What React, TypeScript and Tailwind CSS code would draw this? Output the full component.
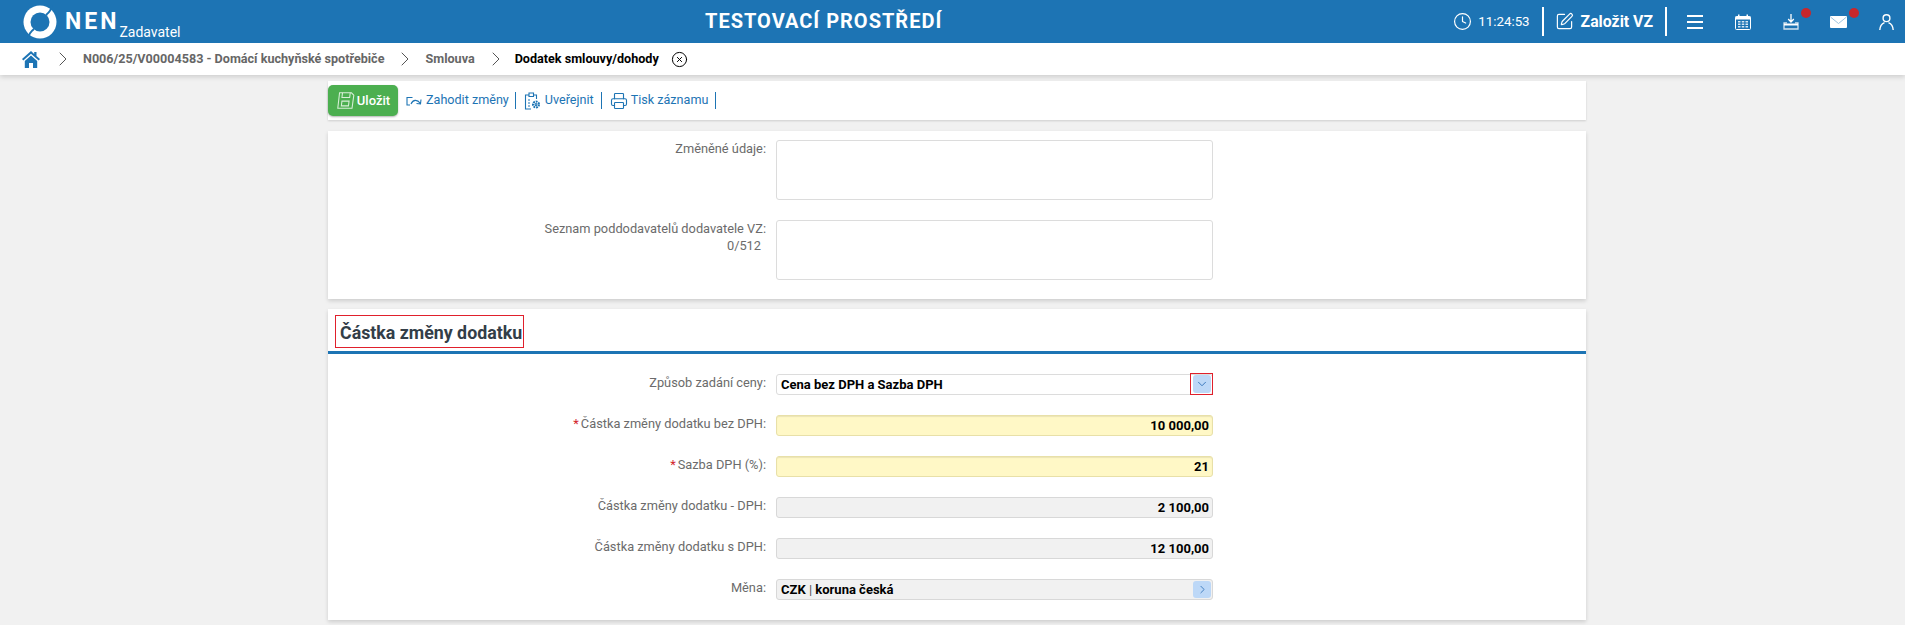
import React from 'react';
import { ChevronDown, ChevronRight, CircleX, Clock, Printer, SquarePen } from 'lucide-react';

const labelCls = 'w-[448px] pr-[10px] text-right text-[12.8px] leading-[17px] text-[#6b6b6b]';

const Field = ({ label, required, value, kind }: { label: string; required?: boolean; value: React.ReactNode; kind: 'select' | 'yellow' | 'gray' | 'lookup' }) => (
  <div className="flex h-[41px] items-start">
    <div className={labelCls}>
      {required && <span className="mr-[2px] text-[#d2232a]">*</span>}
      {label}
    </div>
    {kind === 'select' && (
      <div className="relative flex h-[21px] w-[437px] items-center rounded-[3px] border border-[#dcdcdc] bg-white pl-[4px] text-[13px] font-bold text-black">
        {value}
        <div className="absolute right-[-1px] top-[-2px] flex h-[22px] w-[23px] items-center justify-center border border-[#e0202c]">
          <div className="flex h-[18px] w-[18px] items-center justify-center rounded-[3px] bg-[#bdd8f7]">
            <ChevronDown size={14} strokeWidth={1.5} className="text-[#2a6db5]" />
          </div>
        </div>
      </div>
    )}
    {kind === 'yellow' && (
      <div className="flex h-[21px] w-[437px] items-center justify-end rounded-[3px] border border-[#e8e0a8] bg-[#fff8c6] pr-[3px] text-[13px] font-bold text-black shadow-[inset_0_1px_1px_rgba(0,0,0,0.08)]">
        {value}
      </div>
    )}
    {kind === 'gray' && (
      <div className="flex h-[21px] w-[437px] items-center justify-end rounded-[3px] border border-[#d8d8d8] bg-[#f1f1f1] pr-[3px] text-[13px] font-bold text-black">
        {value}
      </div>
    )}
    {kind === 'lookup' && (
      <div className="flex h-[21px] w-[437px] items-center justify-between rounded-[3px] border border-[#d8d8d8] bg-[#f1f1f1] pl-[4px] text-[13px] font-bold text-black">
        {value}
        <div className="mr-[1px] flex h-[17px] w-[18px] items-center justify-center rounded-[3px] bg-[#bdd8f7]">
          <ChevronRight size={13} strokeWidth={1.5} className="text-[#2a6db5]" />
        </div>
      </div>
    )}
  </div>
);

const TextAreaRow = ({ label, sub }: { label: string; sub?: string }) => (
  <div className="flex items-start">
    <div className={labelCls}>
      <div>{label}</div>
      {sub && <div className="pr-[5px]">{sub}</div>}
    </div>
    <div className="h-[60px] w-[437px] rounded-[3px] border border-[#dcdcdc] bg-white" />
  </div>
);

const Sep = () => <ChevronRight size={24} strokeWidth={1} className="text-[#555555]" />;

const ToolDivider = () => <div className="h-[17px] w-[1px] bg-[#1d74b4]" />;

export default function App() {
  return (
    <div className="h-[625px] overflow-hidden bg-[#f1f1f1] font-['Roboto',sans-serif]">
      {/* top bar */}
      <div className="relative flex h-[43px] items-center justify-between bg-[#1d74b4] text-white">
        <div className="flex items-center pl-[23px]">
          <svg width="34" height="36" viewBox="0 0 34 36">
            <circle cx="17" cy="18" r="16.5" fill="white" />
            <circle cx="17" cy="18" r="9.5" fill="#1d74b4" />
            <path d="M23 11C27 8 28.5 5 29 1M11 25C7 28 5.5 31 5 35" fill="none" stroke="#1d74b4" strokeWidth="2" />
          </svg>
          <span className="ml-[8px] text-[23px] font-bold leading-none tracking-[3px]">NEN</span>
          <span className="mt-[21px] text-[14px] leading-none">Zadavatel</span>
        </div>
        <div className="absolute left-[705px] top-[9px] text-[20px] font-bold leading-[25px] tracking-[1px]">TESTOVACÍ PROSTŘEDÍ</div>
        <div className="flex items-center">
          <Clock size={19} strokeWidth={1.5} />
          <span className="ml-[6px] text-[13.3px]">11:24:53</span>
          <div className="ml-[12px] h-[29px] w-[2px] bg-white" />
          <SquarePen size={19} strokeWidth={1.5} className="ml-[11px]" />
          <span className="ml-[7px] text-[15.8px] font-bold">Založit VZ</span>
          <div className="ml-[12px] h-[29px] w-[2px] bg-white" />
          <svg width="16" height="14" viewBox="0 0 16 14" fill="white" className="ml-[20px]">
            <rect y="0" width="16" height="2" />
            <rect y="6" width="16" height="2" />
            <rect y="12" width="16" height="2" />
          </svg>
          <svg width="16" height="16" viewBox="0 0 16 16" className="ml-[32px]">
            <rect x="0.5" y="2.5" width="15" height="13" rx="1" fill="none" stroke="white" />
            <rect x="0.5" y="2.5" width="15" height="3" fill="white" />
            <rect x="3" y="0.5" width="1.5" height="3" fill="white" />
            <rect x="11.5" y="0.5" width="1.5" height="3" fill="white" />
            <g fill="#d5e6f3">
              <rect x="3" y="7" width="2.5" height="1.5" />
              <rect x="6.75" y="7" width="2.5" height="1.5" />
              <rect x="10.5" y="7" width="2.5" height="1.5" />
              <rect x="3" y="9.5" width="2.5" height="1.5" />
              <rect x="6.75" y="9.5" width="2.5" height="1.5" />
              <rect x="10.5" y="9.5" width="2.5" height="1.5" />
              <rect x="3" y="12" width="2.5" height="1.5" />
              <rect x="6.75" y="12" width="2.5" height="1.5" />
              <rect x="10.5" y="12" width="2.5" height="1.5" />
            </g>
          </svg>
          <div className="relative ml-[32px]">
            <svg width="16" height="16" viewBox="0 0 16 16" fill="none" stroke="white" strokeWidth="1.3" className="block">
              <path d="M8 0V7.5M5.2 5L8 8L10.8 5" />
              <path d="M4 8.8H1V15H15V8.8H12" stroke="#cfe2f0" />
              <path d="M1 10.5H15" strokeWidth="2" />
            </svg>
            <div className="absolute right-[-12px] top-[-6px] h-[10px] w-[10px] rounded-full bg-[#c8272c]" />
          </div>
          <div className="relative ml-[31px]">
            <svg width="17" height="12" viewBox="0 0 17 12" className="block">
              <rect width="17" height="12" rx="1" fill="white" />
              <path d="M0.5 1L8.5 7.5L16.5 1" fill="none" stroke="#9cc4e0" />
            </svg>
            <div className="absolute right-[-12px] top-[-8px] h-[10px] w-[10px] rounded-full bg-[#c8272c]" />
          </div>
          <svg width="15" height="16" viewBox="0 0 15 16" fill="none" stroke="white" strokeWidth="1.4" className="ml-[32px] mr-[11px]">
            <circle cx="7.5" cy="4.2" r="3.4" />
            <path d="M0.8 16C1 11.5 3.5 9.5 5.5 8.6M14.2 16C14 11.5 11.5 9.5 9.5 8.6" />
          </svg>
        </div>
      </div>

      {/* breadcrumb */}
      <div className="flex h-[32px] items-center bg-white pl-[22px] text-[12.6px] font-bold text-[#666666] shadow-[0_2px_5px_rgba(0,0,0,0.15)]">
        <svg width="18" height="17" viewBox="0 0 18 17" fill="#1d74b4">
          <path d="M9 0L0 8L1.3 9.5L9 2.8L16.7 9.5L18 8L14.5 4.9V1H12.2V2.9Z" />
          <path d="M9 4.6L2.8 10V17H7V12H11V17H15.2V10Z" />
        </svg>
        <div className="ml-[11px]"><Sep /></div>
        <span className="ml-[8px]">N006/25/V00004583 - Domácí kuchyňské spotřebiče</span>
        <div className="ml-[9px]"><Sep /></div>
        <span className="ml-[8px]">Smlouva</span>
        <div className="ml-[9px]"><Sep /></div>
        <span className="ml-[7px] text-black">Dodatek smlouvy/dohody</span>
        <CircleX size={17} strokeWidth={1.4} className="ml-[12px] text-black" />
      </div>

      <div className="ml-[328px] w-[1258px]">
        {/* toolbar */}
        <div className="mt-[6px] flex h-[39px] items-center bg-white text-[12.6px] text-[#1d74b4] shadow-[0_1px_2px_rgba(0,0,0,0.15)]">
          <div className="flex h-[31px] w-[70px] items-center justify-center gap-[2px] rounded-[5px] bg-[#4caf50] text-[13px] font-medium text-white shadow-[0_1px_2px_rgba(0,0,0,0.3)]">
            <svg width="19" height="19" viewBox="0 0 16 16" fill="none" stroke="#d8efd8" strokeWidth="0.9">
              <path d="M3 1.5H13L15 3.5L13.5 14.5H1.5Z" />
              <path d="M5.5 1.5L5 5.5H11.5L12 1.5" />
              <path d="M5 8.5H11L10.5 12.5H4.5Z" />
            </svg>
            Uložit
          </div>
          <svg width="17" height="14" viewBox="0 0 17 14" fill="none" stroke="#1d74b4" strokeWidth="1.1" className="ml-[8px]">
            <path d="M4 11H1V3.5H6.5" />
            <path d="M5 10C7 5.5 11 5 14.5 9.5M15 5.5L14.5 10L10.5 9.5" />
          </svg>
          <span className="ml-[3px]">Zahodit změny</span>
          <div className="ml-[6px]"><ToolDivider /></div>
          <svg width="17" height="18" viewBox="0 0 17 18" fill="none" stroke="#1d74b4" strokeWidth="1.1" className="ml-[8px]">
            <path d="M5 3H1.5V17H7M9.5 3H12.5V7" />
            <path d="M5 1H9.5V4.5H5Z" />
            <path d="M4 8H6M4 11H6M4 14H6" />
            <circle cx="12" cy="12.5" r="3" strokeWidth="2" strokeDasharray="1.8 0.9" />
            <circle cx="12" cy="12.5" r="1" fill="white" />
          </svg>
          <span className="ml-[4px]">Uveřejnit</span>
          <div className="ml-[7px]"><ToolDivider /></div>
          <Printer size={18} strokeWidth={1.5} className="ml-[8px]" />
          <span className="ml-[3px]">Tisk záznamu</span>
          <div className="ml-[7px]"><ToolDivider /></div>
        </div>

        {/* text areas */}
        <div className="mt-[11px] flex h-[168px] flex-col gap-[20px] bg-white pt-[9px] shadow-[0_2px_4px_rgba(0,0,0,0.15)]">
          <TextAreaRow label="Změněné údaje:" />
          <TextAreaRow label="Seznam poddodavatelů dodavatele VZ:" sub="0/512" />
        </div>

        {/* amount */}
        <div className="mt-[10px] h-[311px] bg-white shadow-[0_2px_4px_rgba(0,0,0,0.15)]">
          <div className="h-[45px] border-b-[3px] border-[#1d74b4] pl-[7px] pt-[6px]">
            <div className="flex h-[33px] w-[189px] items-center whitespace-nowrap border border-[#e0202c] pl-[4px] pt-[3px] text-[17.8px] font-bold text-[#333e48]">
              Částka změny dodatku
            </div>
          </div>
          <div className="pt-[20px]">
            <Field label="Způsob zadání ceny:" value="Cena bez DPH a Sazba DPH" kind="select" />
            <Field label="Částka změny dodatku bez DPH:" required value="10 000,00" kind="yellow" />
            <Field label="Sazba DPH (%):" required value="21" kind="yellow" />
            <Field label="Částka změny dodatku - DPH:" value="2 100,00" kind="gray" />
            <Field label="Částka změny dodatku s DPH:" value="12 100,00" kind="gray" />
            <Field label="Měna:" value={<span>CZK <span className="font-normal text-[#555555]">|</span> koruna česká</span>} kind="lookup" />
          </div>
        </div>
      </div>
    </div>
  );
}
